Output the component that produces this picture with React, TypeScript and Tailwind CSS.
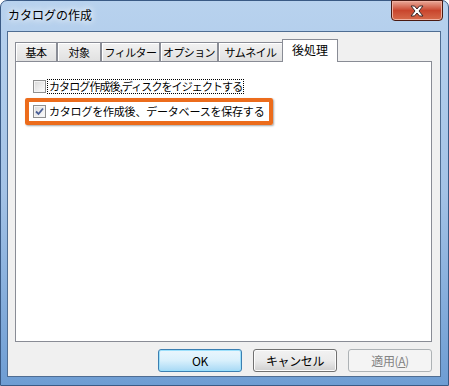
import { type ReactNode } from 'react'

const FONT = "font-['Noto_Sans_CJK_JP','Noto_Sans',sans-serif]"

const TABS = [
  { label: '基本', w: 'w-[42px]' },
  { label: '対象', w: 'w-[44px]' },
  { label: 'フィルター', w: 'w-[59px]' },
  { label: 'オプション', w: 'w-[58px]' },
  { label: 'サムネイル', w: 'w-[65px]' },
]

function Checkbox({ checked }: { checked?: boolean }) {
  return (
    <span className="flex h-[13px] w-[13px] shrink-0 items-center justify-center border border-[#8e8f8f] bg-white">
      <span className="flex h-[11px] w-[11px] items-center justify-center border border-[#f4f4f4] bg-gradient-to-br from-[#dcdcdc] to-[#fbfbfb]">
        {checked ? (
          <svg width="9" height="9" viewBox="0 0 9 9">
            <path d="M1 4.5 L3.5 7 L8 1.5" fill="none" stroke="#4a5f97" strokeWidth="1.8" />
          </svg>
        ) : null}
      </span>
    </span>
  )
}

function Button({ children, kind }: { children: ReactNode; kind: 'default' | 'normal' | 'disabled' }) {
  const cls =
    kind === 'default'
      ? 'border-[#3c7fb1] bg-gradient-to-b from-[#eaf6fd] via-[#d9f0fc] to-[#a7d9f5] text-black shadow-[inset_0_0_0_1px_#9be0fc]'
      : kind === 'normal'
        ? 'border-[#707070] bg-gradient-to-b from-[#f2f2f2] via-[#ebebeb] to-[#cfcfcf] text-black shadow-[inset_0_0_0_1px_#fcfcfc]'
        : 'border-[#adb2b5] bg-[#f4f4f4] text-[#838383]'
  return (
    <div className={`flex h-[23px] w-[84px] items-center justify-center rounded-[3px] border text-[12px] leading-none tracking-[-0.4px] ${cls}`}>
      {children}
    </div>
  )
}

export default function App() {
  return (
    <div className={`${FONT} h-[386px] w-[449px] overflow-hidden bg-white`}>
      <div className="flex h-full w-full flex-col rounded-t-[7px] border border-[#3a5a85] bg-gradient-to-b from-[#b8d2ee] via-[#a3c2e6] to-[#6e9dd3]">
        {/* title bar */}
        <div className="relative flex h-[30px] shrink-0 items-start">
          <span className="ml-[7px] mt-[7px] text-[12px] leading-[14px] text-black [text-shadow:0_0_6px_#fff,0_0_10px_#fff]">
            カタログの作成
          </span>
          <div className="absolute right-[5px] top-[-1px] flex h-[21px] w-[52px] items-center justify-center rounded-b-[4px] border border-[#4a1a12] bg-gradient-to-b from-[#e8a898] via-[#c9452d] to-[#d66a4b] shadow-[inset_0_0_0_1px_#f0b0a0]">
            <svg width="16" height="12" viewBox="0 0 16 12">
              <path
                d="M2 1 H5.5 L8 4 L10.5 1 H14 L10 6 L14 11 H10.5 L8 8 L5.5 11 H2 L6 6 Z"
                fill="#fff"
                stroke="#3a2a2a"
                strokeWidth="1"
              />
            </svg>
          </div>
        </div>

        <div className="flex min-h-0 flex-1">
          <div className="w-[6px] shrink-0" />
          {/* client area */}
          <div className="flex min-w-0 flex-1 flex-col border border-[#4f6d92] bg-[#f0f0f0] pl-[7px] pr-[8px] pt-[7px]">
            {/* tabs */}
            <div className="relative z-10 flex h-[22px] items-end">
              {TABS.map((t) => (
                <div
                  key={t.label}
                  className={`flex h-[19px] ${t.w} items-center justify-center whitespace-nowrap border border-b-0 border-[#898c95] bg-gradient-to-b from-[#f2f2f2] to-[#e1e1e1] text-[11px] leading-none tracking-[-0.6px] text-black shadow-[inset_1px_1px_0_#fff]`}
                >
                  {t.label}
                </div>
              ))}
              <div className="-ml-[1px] mb-[-1px] flex h-[23px] w-[56px] items-start justify-center whitespace-nowrap border border-b-0 border-[#898c95] bg-white pt-[3px] text-[12px] leading-[14px] text-black">
                後処理
              </div>
            </div>

            {/* panel */}
            <div className="flex h-[281px] flex-col border border-[#898c95] bg-white pt-[17px] text-[11px] leading-[13px] text-black">
              <div className="ml-[17px] flex items-center">
                <Checkbox />
                <span className="ml-[1px] whitespace-nowrap border border-dotted border-black px-[1px] tracking-[-0.9px]">
                  カタログ作成後,ディスクをイジェクトする
                </span>
              </div>
              <div className="ml-[9px] mt-[4px] flex h-[27px] w-[248px] items-center rounded-[2px] border-4 border-[#ec6c1c] pl-[4px] shadow-[1px_1px_2px_rgba(0,0,0,0.35)]">
                <Checkbox checked />
                <span className="ml-[3px] whitespace-nowrap tracking-[-0.2px]">カタログを作成後、データベースを保存する</span>
              </div>
            </div>

            {/* buttons */}
            <div className="mt-[7px] flex justify-end gap-[11px]">
              <Button kind="default">OK</Button>
              <Button kind="normal">キャンセル</Button>
              <Button kind="disabled">
                <span>
                  適用(<span className="underline">A</span>)
                </span>
              </Button>
            </div>
          </div>
          <div className="w-[7px] shrink-0" />
        </div>
        <div className="h-[8px] shrink-0" />
      </div>
    </div>
  )
}
